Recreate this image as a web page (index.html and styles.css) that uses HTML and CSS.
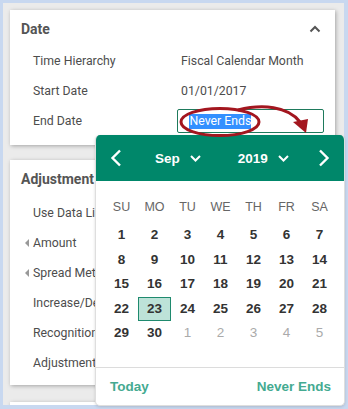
FILE: index.html
```html
<!DOCTYPE html>
<html>
<head>
<meta charset="utf-8">
<link rel="stylesheet" href="styles.css">
</head>
<body>
<div class="frame">
  <section class="card card-date">
    <header class="card-title">
      <span>Date</span>
      <svg class="collapse" width="12" height="8" viewBox="0 0 12 8"><polyline points="1.5,6.5 6,2 10.5,6.5" fill="none" stroke="#555" stroke-width="2"/></svg>
    </header>
    <div class="rows">
      <div class="row"><span class="label">Time Hierarchy</span><span class="value">Fiscal Calendar Month</span></div>
      <div class="row"><span class="label">Start Date</span><span class="value">01/01/2017</span></div>
      <div class="row"><span class="label">End Date</span><span class="input"><span class="sel">Never Ends</span></span></div>
    </div>
  </section>
  <section class="card card-adj">
    <header class="card-title"><span>Adjustment</span></header>
    <div class="rows rows-adj">
      <div class="row"><span class="label">Use Data Li</span></div>
      <div class="row"><span class="label"><i class="tri"></i>Amount</span></div>
      <div class="row"><span class="label"><i class="tri"></i>Spread Met</span></div>
      <div class="row"><span class="label">Increase/De</span></div>
      <div class="row"><span class="label">Recognition</span></div>
      <div class="row"><span class="label">Adjustment</span></div>
    </div>
  </section>
  <section class="card card-3"></section>
</div>

<div class="picker">
  <div class="picker-head">
    <svg class="nav prev" width="12" height="18" viewBox="0 0 12 18"><polyline points="10,1.5 2.5,9 10,16.5" fill="none" stroke="#fff" stroke-width="2.4"/></svg>
    <span class="sel-group month"><span>Sep</span><svg width="11" height="7" viewBox="0 0 11 7"><polyline points="1,1 5.5,5.5 10,1" fill="none" stroke="#fff" stroke-width="2"/></svg></span>
    <span class="sel-group year"><span>2019</span><svg width="11" height="7" viewBox="0 0 11 7"><polyline points="1,1 5.5,5.5 10,1" fill="none" stroke="#fff" stroke-width="2"/></svg></span>
    <svg class="nav next" width="12" height="18" viewBox="0 0 12 18"><polyline points="2,1.5 9.5,9 2,16.5" fill="none" stroke="#fff" stroke-width="2.4"/></svg>
  </div>
  <div class="dow">
    <span>SU</span><span>MO</span><span>TU</span><span>WE</span><span>TH</span><span>FR</span><span>SA</span>
  </div>
  <div class="days">
    <span>1</span><span>2</span><span>3</span><span>4</span><span>5</span><span>6</span><span>7</span>
    <span>8</span><span>9</span><span>10</span><span>11</span><span>12</span><span>13</span><span>14</span>
    <span>15</span><span>16</span><span>17</span><span>18</span><span>19</span><span>20</span><span>21</span>
    <span>22</span><span class="today">23</span><span>24</span><span>25</span><span>26</span><span>27</span><span>28</span>
    <span>29</span><span>30</span><span class="other">1</span><span class="other">2</span><span class="other">3</span><span class="other">4</span><span class="other">5</span>
  </div>
  <div class="picker-foot">
    <span>Today</span>
    <span>Never Ends</span>
  </div>
</div>

<svg class="annot" width="348" height="409" viewBox="0 0 348 409">
  <ellipse cx="220" cy="122" rx="39" ry="13.5" fill="none" stroke="#a3161f" stroke-width="3"/>
  <path d="M238 110 C 262 104, 288 106, 300 122" fill="none" stroke="#a3161f" stroke-width="3"/>
  <polygon points="293,122 308,119 306,133" fill="#a3161f"/>
</svg>
</body>
</html>
```

FILE: styles.css
```css
* { box-sizing: border-box; }
html, body { margin: 0; padding: 0; }
body {
  width: 348px;
  height: 409px;
  background: #c8d8f0;
  font-family: Roboto, "Liberation Sans", sans-serif;
  position: relative;
  overflow: hidden;
}
.frame {
  margin: 3px;
  width: 341px;
  height: 402px;
  background: #ebebeb;
  padding: 7px 9px 0 7px;
  overflow: hidden;
}
.card {
  background: #fff;
  box-shadow: 1px 1px 4px rgba(0,0,0,0.3);
  padding: 0 11px;
}
.card-date { height: 135px; margin-bottom: 15px; }
.card-adj { height: 225px; margin-bottom: 17px; }
.card-3 { height: 40px; }
.card-title {
  display: flex;
  justify-content: space-between;
  align-items: center;
  padding-top: 9px;
  height: 29px;
  line-height: 20px;
  font-size: 14px;
  font-weight: bold;
  color: #555;
}
.collapse { margin-right: 3px; }
.rows { margin-top: 7px; padding-left: 12px; }
.rows-adj { margin-top: 9px; }
.row {
  display: flex;
  align-items: center;
  height: 30px;
  font-size: 12.3px;
  color: #4d4d4d;
}
.label { width: 145px; display: flex; align-items: center; position: relative; }
.value { padding-left: 3px; }
.tri {
  position: absolute;
  left: -8px;
  top: 50%;
  margin-top: -4px;
  width: 0; height: 0;
  border-top: 4px solid transparent;
  border-bottom: 4px solid transparent;
  border-right: 4px solid #999;
}
.input {
  width: 147px;
  height: 24px;
  border: 1px solid #1e7a5c;
  border-radius: 2px;
  padding-left: 11px;
  display: flex;
  align-items: center;
}
.sel { background: #3390ff; color: #fff; line-height: 15px; }

.picker {
  position: absolute;
  left: 95px;
  top: 135px;
  width: 250px;
  height: 271px;
  background: #fff;
  border: 1px solid #dedede;
  border-top: none;
  border-radius: 5px;
  box-shadow: 0 1px 3px rgba(0,0,0,0.15);
  font-family: "Liberation Sans", Arial, sans-serif;
  overflow: hidden;
}
.picker-head {
  height: 46px;
  background: #00876a;
  display: flex;
  align-items: center;
  padding-left: 14px;
  color: #fff;
  font-weight: bold;
  font-size: 13.5px;
}
.sel-group { display: flex; align-items: center; gap: 10px; }
.month { margin-left: 33px; }
.year { margin-left: 37px; }
.next { margin-left: 29px; }
.dow {
  margin-top: 14px;
  padding-left: 9px;
  display: grid;
  grid-template-columns: repeat(7, 33px);
  height: 24px;
  align-items: center;
  text-align: center;
  font-size: 12.5px;
  color: #666;
}
.days {
  margin-top: 4px;
  padding-left: 9px;
  display: grid;
  grid-template-columns: repeat(7, 33px);
  grid-auto-rows: 24.5px;
  align-items: center;
  text-align: center;
  font-size: 13.5px;
  font-weight: bold;
  color: #333;
}
.days span { height: 24px; line-height: 24px; }
.days .today {
  background: #bde2d8;
  border: 1px solid #1f8a6e;
  line-height: 22px;
}
.days .other { color: #aaa; font-weight: normal; }
.picker-foot {
  margin-top: 21px;
  border-top: 1px solid #dcdcdc;
  height: 38px;
  display: flex;
  justify-content: space-between;
  align-items: center;
  padding: 0 13px 0 14px;
  font-size: 13.5px;
  font-weight: bold;
  color: #44aa91;
}
.annot { position: absolute; left: 0; top: 0; pointer-events: none; }
```
